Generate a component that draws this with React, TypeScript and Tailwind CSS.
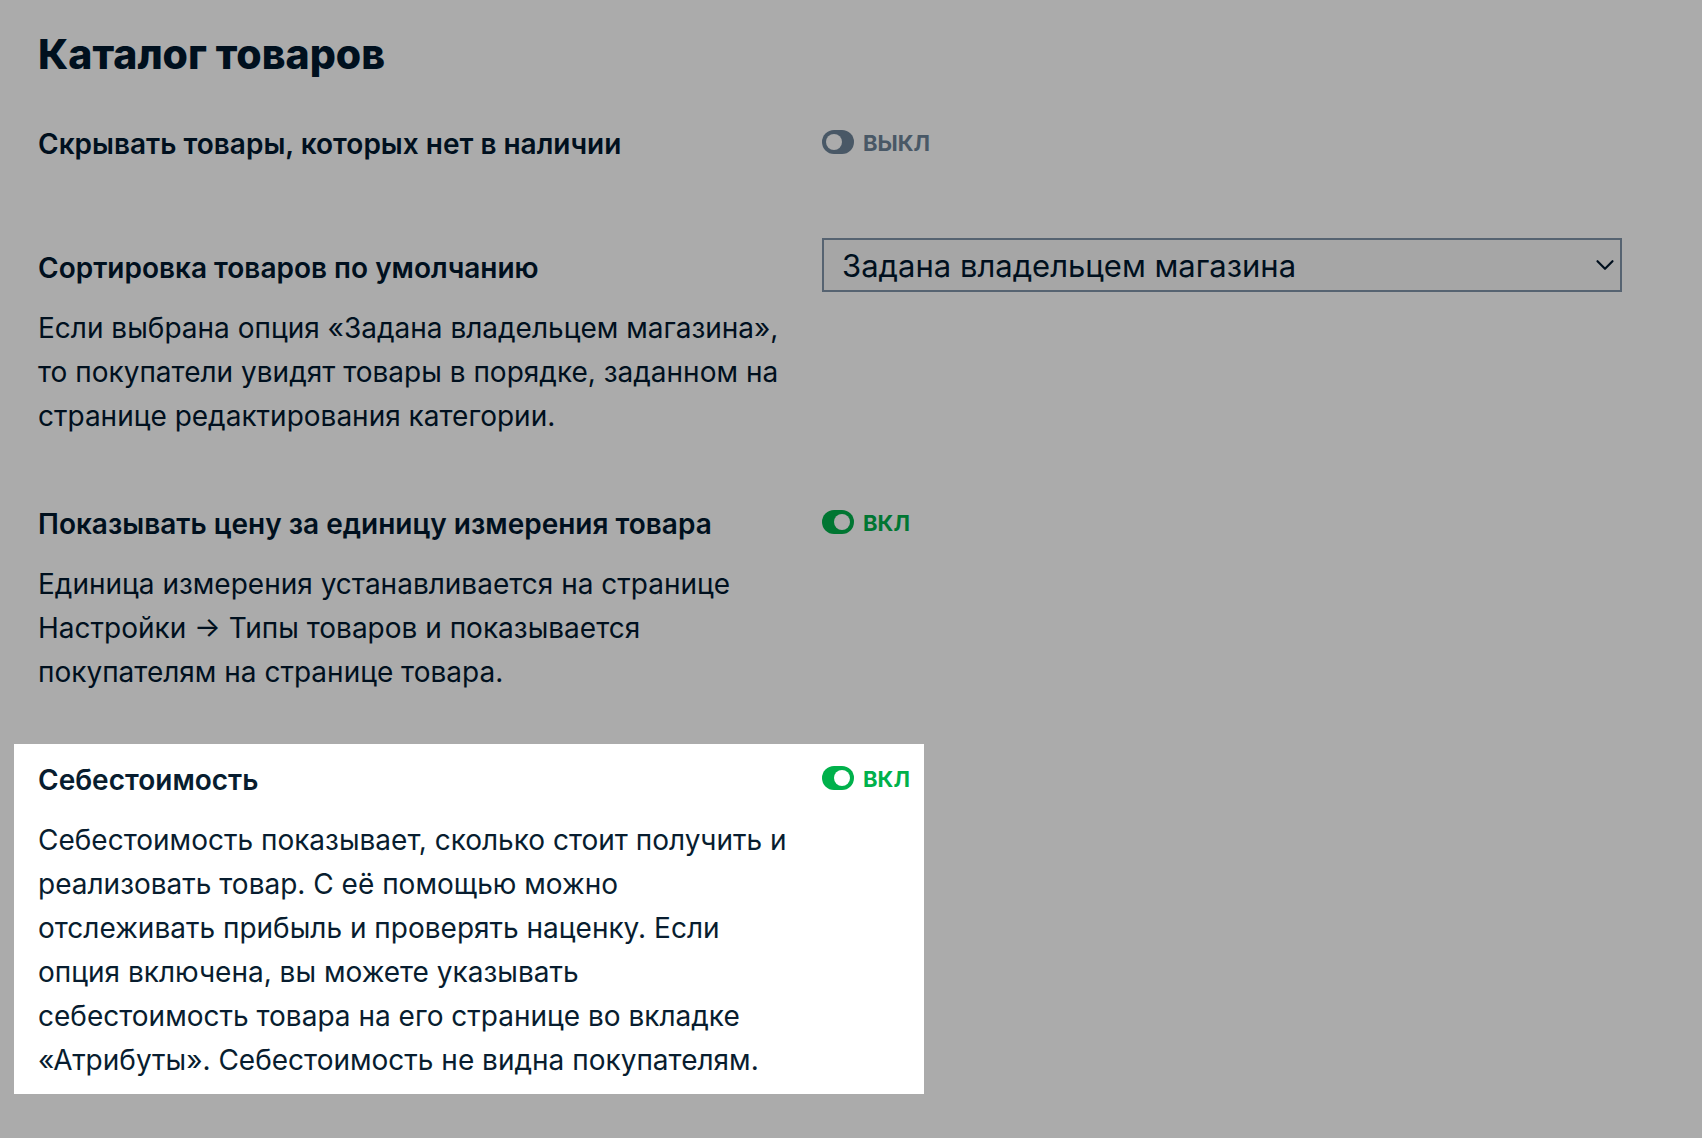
import { useState } from "react";
import type { ReactNode } from "react";
import { clsx } from "clsx";
import { ChevronDown } from "lucide-react";

interface SettingRowProps {
  id: string;
  title: string;
  description?: string;
  /** Lights the row up above the dimmed page */
  highlighted?: boolean;
  className?: string;
  children: ReactNode;
}

/* ── One setting: label and hint on the left, control on the right ───────── */
function SettingRow({ id, title, description, highlighted = false, className, children }: SettingRowProps) {
  return (
    <div
      className={clsx(
        "grid grid-cols-[101fr_100fr]",
        highlighted ? "text-[#081d2f]" : "text-[#00101e]",
        className
      )}
    >
      <div className={clsx("pl-6 pr-8 pt-2 pb-3", highlighted && "bg-white pt-[14px]")}>
        <label htmlFor={id} className="block text-[28px] leading-[44px] font-semibold">
          {title}
        </label>
        {description && (
          <p id={`${id}-hint`} className="mt-4 text-[28px] leading-[44px]">
            {description}
          </p>
        )}
      </div>
      {children}
    </div>
  );
}

interface ToggleProps {
  id: string;
  defaultChecked?: boolean;
  highlighted?: boolean;
}

/* ── Toggle with its state written next to it ────────────────────────────── */
function Toggle({ id, defaultChecked = false, highlighted = false }: ToggleProps) {
  const [checked, setChecked] = useState(defaultChecked);

  return (
    <div className={clsx("justify-self-start pt-4 pr-[14px]", highlighted && "bg-white pt-[22px]")}>
      <div
        className={clsx(
          "flex items-start gap-[9px]",
          !checked && "text-[#495866]",
          checked && (highlighted ? "text-[#00b14b]" : "text-[#007632]")
        )}
      >
        <input
          id={id}
          type="checkbox"
          role="switch"
          checked={checked}
          onChange={(e) => setChecked(e.target.checked)}
          className={clsx(
            "appearance-none w-8 h-6 p-1 rounded-full bg-current cursor-pointer before:block before:size-4 before:rounded-full checked:before:ml-2",
            highlighted ? "before:bg-white" : "before:bg-[#ababab]"
          )}
        />
        <span className="text-[22px] leading-[26px] font-bold">{checked ? "ВКЛ" : "ВЫКЛ"}</span>
      </div>
    </div>
  );
}

const sortOptions = ["Задана владельцем магазина", "Сначала новые", "Сначала дешёвые", "Сначала дорогие"];

export default function App() {
  return (
    <main className="min-h-screen bg-[#ababab] pl-[14px] pr-20 pt-8 pb-11 font-['Inter','Noto_Sans',sans-serif]">
      <h1 className="pl-6 text-[41px] leading-[44px] font-extrabold text-[#00101e]">Каталог товаров</h1>

      <SettingRow id="hide-out-of-stock" title="Скрывать товары, которых нет в наличии" className="mt-[38px]">
        <Toggle id="hide-out-of-stock" />
      </SettingRow>

      <SettingRow
        id="default-sort"
        title="Сортировка товаров по умолчанию"
        description="Если выбрана опция «Задана владельцем магазина», то покупатели увидят товары в порядке, заданном на странице редактирования категории."
        className="mt-[60px]"
      >
        <div className="grid self-start">
          <select
            id="default-sort"
            className="col-start-1 row-start-1 h-[54px] w-full appearance-none border-2 border-[#566371] bg-[#a6a6a6] pl-[18px] pr-10 pt-0.5 text-[31px] leading-[44px]"
          >
            {sortOptions.map((option) => (
              <option key={option}>{option}</option>
            ))}
          </select>
          <ChevronDown
            className="col-start-1 row-start-1 mr-0.5 self-center justify-self-end pointer-events-none"
            size={30}
            strokeWidth={1.75}
            aria-hidden="true"
          />
        </div>
      </SettingRow>

      <SettingRow
        id="unit-price"
        title="Показывать цену за единицу измерения товара"
        description="Единица измерения устанавливается на странице Настройки → Типы товаров и показывается покупателям на странице товара."
        className="mt-11"
      >
        <Toggle id="unit-price" defaultChecked />
      </SettingRow>

      <SettingRow
        id="cost-price"
        title="Себестоимость"
        description="Себестоимость показывает, сколько стоит получить и реализовать товар. С её помощью можно отслеживать прибыль и проверять наценку. Если опция включена, вы можете указывать себестоимость товара на его странице во вкладке «Атрибуты». Себестоимость не видна покупателям."
        className="mt-[38px]"
        highlighted
      >
        <Toggle id="cost-price" defaultChecked highlighted />
      </SettingRow>
    </main>
  );
}
